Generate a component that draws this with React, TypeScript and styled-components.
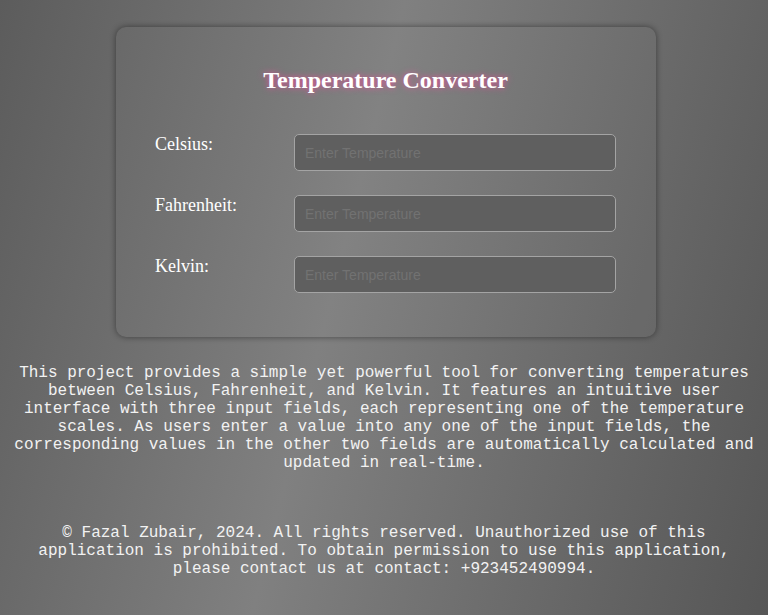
import React from "react";
import styled, { createGlobalStyle } from "styled-components";

const Global = createGlobalStyle`
  html, body { margin: 0; padding: 0; }
  body {
    min-height: 615px;
    background: linear-gradient(104deg, #5c5c5c 0%, #808080 44%, #565656 100%);
    font-family: "Liberation Serif", "Times New Roman", serif;
    color: #fff;
  }
`;

const Page = styled.div`
  padding: 27px 8px 0;
  display: flex;
  flex-direction: column;
  align-items: center;
`;

const Card = styled.div`
  width: 540px;
  height: 310px;
  box-sizing: border-box;
  margin-left: 4px;
  padding: 40px 40px 0 39px;
  border-radius: 10px;
  background: rgba(255, 255, 255, 0.02);
  box-shadow: 0 0 6px rgba(0, 0, 0, 0.45);
  display: flex;
  flex-direction: column;
`;

const Title = styled.h2`
  margin: 0 0 40px;
  text-align: center;
  font-size: 24px;
  font-weight: bold;
  color: #fff;
  text-shadow: 0 0 6px rgba(255, 70, 160, 0.8);
`;

const Rows = styled.div`
  display: flex;
  flex-direction: column;
  gap: 24px;
`;

const Row = styled.div`
  display: flex;
  align-items: flex-start;
`;

const Label = styled.label`
  width: 139px;
  font-size: 18px;
  line-height: 21px;
  color: #fff;
`;

const Input = styled.input`
  width: 322px;
  height: 37px;
  box-sizing: border-box;
  background: #5f5f5f;
  border: 1px solid #a4a4a4;
  border-radius: 5px;
  padding: 0 10px;
  font-family: "Liberation Sans", Arial, sans-serif;
  font-size: 14px;
  color: #fff;
  outline: none;
  &::placeholder { color: #727272; }
`;

const Text = styled.p`
  margin: 0;
  max-width: 752px;
  text-align: center;
  font-family: "Liberation Mono", "Courier New", monospace;
  font-size: 16px;
  line-height: 18px;
  color: #f2f2f2;
`;

const About = styled(Text)`
  margin-top: 27px;
`;

const Footer = styled(Text)`
  margin-top: 52px;
  padding: 0 30px;
`;

const fields = ["Celsius:", "Fahrenheit:", "Kelvin:"];

export default function App() {
  return (
    <>
      <Global />
      <Page>
        <Card>
          <Title>Temperature Converter</Title>
          <Rows>
            {fields.map((f) => (
              <Row key={f}>
                <Label>{f}</Label>
                <Input type="number" placeholder="Enter Temperature" />
              </Row>
            ))}
          </Rows>
        </Card>
        <About>
          This project provides a simple yet powerful tool for converting temperatures
          between Celsius, Fahrenheit, and Kelvin. It features an intuitive user
          interface with three input fields, each representing one of the temperature
          scales. As users enter a value into any one of the input fields, the
          corresponding values in the other two fields are automatically calculated and
          updated in real-time.
        </About>
        <Footer>
          © Fazal Zubair, 2024. All rights reserved. Unauthorized use of this
          application is prohibited. To obtain permission to use this application,
          please contact us at contact: +923452490994.
        </Footer>
      </Page>
    </>
  );
}
